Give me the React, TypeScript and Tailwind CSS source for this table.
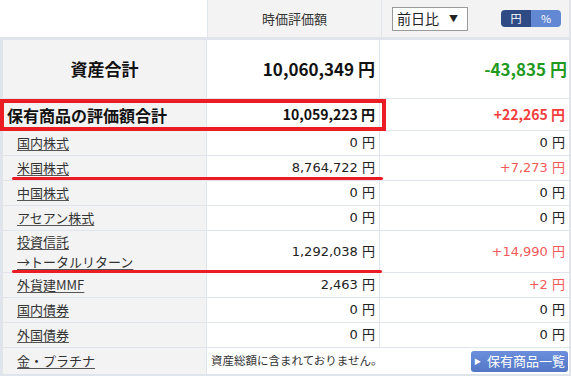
import React from "react";

const F = { fontFamily: '"Noto Sans CJK JP", "Noto Sans", sans-serif' };
const NUM = { fontFamily: '"DejaVu Sans", "Noto Sans CJK JP", sans-serif' };

type Row = {
  label: string[];
  value?: string;
  diff?: string;
  diffColor?: string;
  h: string;
};

const rows: Row[] = [
  { label: ["国内株式"], value: "0 円", diff: "0 円", h: "h-[25px]" },
  { label: ["米国株式"], value: "8,764,722 円", diff: "+7,273 円", diffColor: "text-[#f25a5a]", h: "h-[25px]" },
  { label: ["中国株式"], value: "0 円", diff: "0 円", h: "h-[25px]" },
  { label: ["アセアン株式"], value: "0 円", diff: "0 円", h: "h-[25px]" },
  { label: ["投資信託", "→トータルリターン"], value: "1,292,038 円", diff: "+14,990 円", diffColor: "text-[#f25a5a]", h: "h-[42px]" },
  { label: ["外貨建MMF"], value: "2,463 円", diff: "+2 円", diffColor: "text-[#f25a5a]", h: "h-[25px]" },
  { label: ["国内債券"], value: "0 円", diff: "0 円", h: "h-[25px]" },
  { label: ["外国債券"], value: "0 円", diff: "0 円", h: "h-[25px]" },
];

function Label({ lines }: { lines: string[] }) {
  return (
    <div className="flex flex-col gap-[4px] pl-[14px] text-[13px] leading-[16px] text-[#333]">
      {lines.map((l) => (
        <span key={l} className="underline underline-offset-[2px] decoration-[#555]">
          {l}
        </span>
      ))}
    </div>
  );
}

export default function App() {
  return (
    <div style={F} className="relative w-[571px] h-[377px] overflow-hidden bg-white text-[#222]">
      {/* header */}
      <div className="flex h-[37px]">
        <div className="w-[207px] bg-white" />
        <div className="w-[1px] bg-[#dfe5eb]" />
        <div className="w-[173px] bg-[#f3f3f3] flex items-center justify-center text-[13px] text-[#333]">
          時価評価額
        </div>
        <div className="w-[1px] bg-[#dfe5eb]" />
        <div className="flex-1 bg-[#f3f3f3] flex items-center pl-[10px] pr-[8px] border-r-2 border-[#dfe5eb]">
          <div className="w-[76px] h-[24px] border border-[#9a9a9a] bg-white flex items-center justify-between px-[4px] text-[14px] text-[#222]">
            <span>前日比</span>
            <span className="text-[9px] pr-[5px]">▼</span>
          </div>
          <div className="ml-auto flex h-[17px] w-[60px] rounded-[4px] overflow-hidden text-[11px] text-white">
            <div className="w-1/2 bg-[#2e4b86] flex items-center justify-center">円</div>
            <div className="w-1/2 bg-[#6288d4] flex items-center justify-center">%</div>
          </div>
        </div>
      </div>

      {/* table body */}
      <div className="border-t-[3px] border-l-[3px] border-r-2 border-b-2 border-[#dfe5eb]">
        {/* total assets */}
        <div className="flex h-[59px] border-b border-[#dfe5eb]">
          <div className="w-[204px] bg-[#f3f3f3] border-r border-[#dfe5eb] flex items-center justify-center text-[17px] font-bold text-[#111]">
            資産合計
          </div>
          <div className="w-[173px] border-r border-[#dfe5eb] flex items-center justify-end pr-[4px] text-[17px] font-bold text-[#111]">
            10,060,349 円
          </div>
          <div className="flex-1 flex items-center justify-end pr-[2px] text-[17px] font-bold text-[#1f9a1f]">
            -43,835 円
          </div>
        </div>

        {/* holdings total */}
        <div className="flex h-[32px] border-b border-[#dfe5eb]">
          <div className="w-[204px] bg-[#f3f3f3] border-r border-[#dfe5eb] flex items-center pl-[4px] text-[16px] font-bold text-[#111]">
            保有商品の評価額合計
          </div>
          <div className="w-[173px] border-r border-[#dfe5eb] flex items-center justify-end pr-[4px] text-[14px] font-bold text-[#111]">
            10,059,223 円
          </div>
          <div className="flex-1 flex items-center justify-end pr-[4px] text-[14px] font-bold text-[#f43d3d]">
            +22,265 円
          </div>
        </div>

        {rows.map((r) => (
          <div key={r.label[0]} className={`flex ${r.h} border-b border-[#dfe5eb]`}>
            <div className="w-[204px] bg-[#f3f3f3] border-r border-[#dfe5eb] flex items-center">
              <Label lines={r.label} />
            </div>
            <div style={NUM} className="w-[173px] border-r border-[#dfe5eb] flex items-center justify-end pr-[4px] text-[13px] text-[#222]">
              {r.value}
            </div>
            <div style={NUM} className={`flex-1 flex items-center justify-end pr-[4px] text-[13px] ${r.diffColor ?? "text-[#222]"}`}>
              {r.diff}
            </div>
          </div>
        ))}

        {/* gold row */}
        <div className="flex h-[26px]">
          <div className="w-[204px] bg-[#f3f3f3] border-r border-[#dfe5eb] flex items-center">
            <Label lines={["金・プラチナ"]} />
          </div>
          <div className="flex-1 flex items-center pl-[4px] pr-[1px] text-[11.5px] text-[#333]">
            <span>資産総額に含まれておりません。</span>
            <button className="ml-auto h-[21px] w-[97px] rounded-[3px] bg-gradient-to-b from-[#6b8fdb] to-[#5377c6] text-white text-[13px] flex items-center justify-center gap-[6px]">
              <span className="text-[7px]">▶</span>
              <span>保有商品一覧</span>
            </button>
          </div>
        </div>
      </div>

      {/* red annotations */}
      <div className="absolute left-0 top-[99px] w-[386px] h-[32px] border-[4px] border-[#ec1c24]" />
      <div className="absolute left-[12px] top-[177px] w-[371px] h-[3px] rounded-full bg-[#ec1c24]" />
      <div className="absolute left-[12px] top-[270px] w-[370px] h-[3px] rounded-full bg-[#ec1c24]" />
    </div>
  );
}
